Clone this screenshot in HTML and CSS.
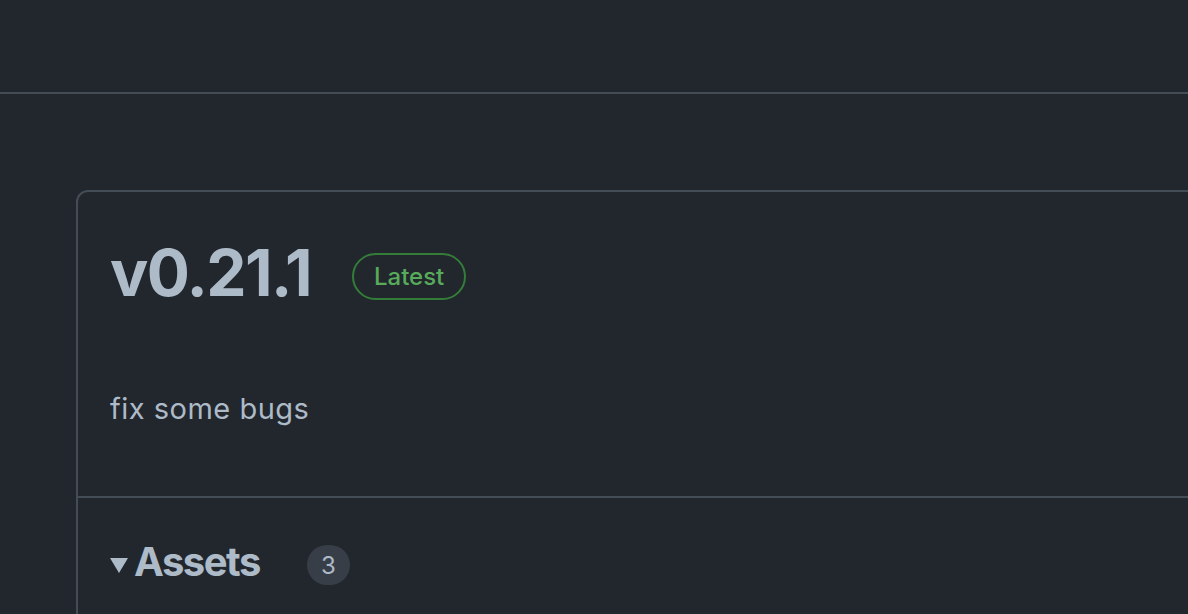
FILE: index.html
```html
<!DOCTYPE html>
<html lang="en">
<head>
<meta charset="utf-8">
<title>Release v0.21.1</title>
<link rel="stylesheet" href="styles.css">
</head>
<body>
<header class="topbar"></header>
<main class="main">
  <section class="release-card">
    <div class="release-head">
      <div class="title-row">
        <h1 class="release-title">v0.21.1</h1>
        <span class="label-latest">Latest</span>
      </div>
      <p class="release-body">fix some bugs</p>
    </div>
    <div class="assets">
      <div class="assets-row">
        <span class="caret"></span>
        <h2 class="assets-title">Assets</h2>
        <span class="counter">3</span>
      </div>
    </div>
  </section>
</main>
</body>
</html>
```
FILE: styles.css
```css
html, body {
  margin: 0;
  padding: 0;
  background: #22272e;
  overflow: hidden;
  height: 614px;
}
body {
  font-family: Inter, "Noto Sans", sans-serif;
  color: #adbac7;
}
.topbar {
  height: 92px;
  border-bottom: 2px solid #444c56;
}
.main {
  padding: 96px 0 0 76px;
}
.release-card {
  width: 1300px;
  border: 2px solid #444c56;
  border-radius: 12px;
}
.release-head {
  padding: 41px 32px 66px 32px;
  border-bottom: 2px solid #444c56;
}
.title-row {
  display: flex;
  align-items: center;
  gap: 41px;
}
.release-title {
  margin: 0;
  font-size: 64px;
  line-height: 80px;
  font-weight: 700;
  letter-spacing: -1.6px;
  color: #adbac7;
}
.label-latest {
  display: inline-flex;
  align-items: center;
  height: 43px;
  padding: 0 20px;
  margin-top: 7px;
  border: 2px solid #347d39;
  border-radius: 999px;
  color: #57ab5a;
  font-size: 24px;
  font-weight: 500;
}
.release-body {
  margin: 75px 0 0 0;
  font-size: 29px;
  line-height: 42px;
  letter-spacing: 0.5px;
  color: #adbac7;
}
.assets {
  padding: 39px 32px 40px 32px;
}
.assets-row {
  display: flex;
  align-items: center;
}
.caret {
  width: 0;
  height: 0;
  border-left: 9px solid transparent;
  border-right: 9px solid transparent;
  border-top: 15px solid #adbac7;
  margin-right: 6px;
  margin-top: 6px;
}
.assets-title {
  margin: 0;
  font-size: 40px;
  line-height: 50px;
  font-weight: 700;
  letter-spacing: -1.5px;
  color: #adbac7;
}
.counter {
  margin-left: 47px;
  width: 43px;
  height: 40px;
  border-radius: 20px;
  background: #373e47;
  color: #adbac7;
  font-size: 24px;
  display: inline-flex;
  align-items: center;
  justify-content: center;
  margin-top: 6px;
}
```
